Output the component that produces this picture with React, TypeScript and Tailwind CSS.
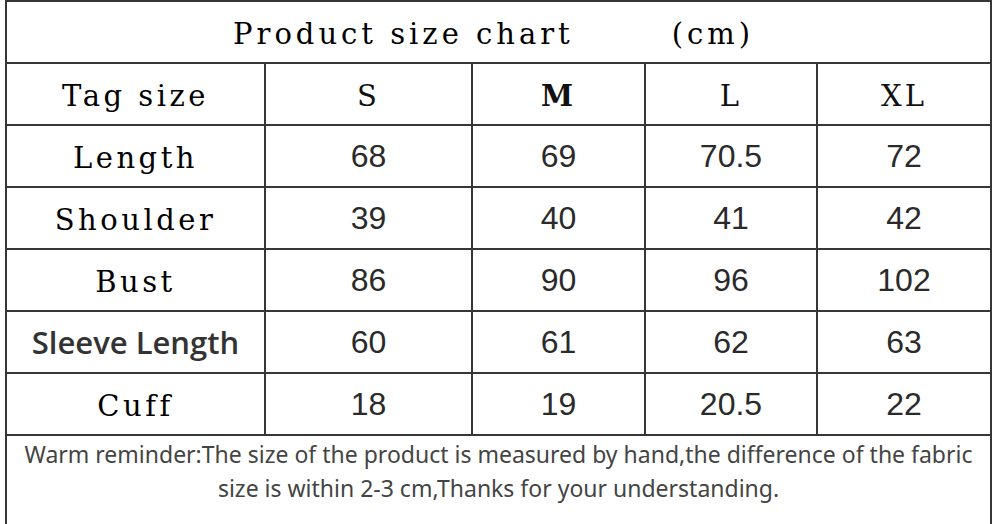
import React from "react";

const cols = ["S", "M", "L", "XL"];
const rows: { label: string; sans?: boolean; values: string[] }[] = [
  { label: "Length", values: ["68", "69", "70.5", "72"] },
  { label: "Shoulder", values: ["39", "40", "41", "42"] },
  { label: "Bust", values: ["86", "90", "96", "102"] },
  { label: "Sleeve Length", sans: true, values: ["60", "61", "62", "63"] },
  { label: "Cuff", values: ["18", "19", "20.5", "22"] },
];

const serif = "font-['DejaVu_Serif',serif] text-[29px]";
const sans = "font-['Liberation_Sans',Arial,sans-serif]";

export default function App() {
  return (
    <div className="w-[1003px] h-[524px] bg-white overflow-hidden">
      <div className="ml-[5px] w-[987px] h-[524px] bg-[#363636] px-[2px] pt-[2px] flex flex-col gap-[2px]">
        <div className="grid grid-cols-[257px_205px_171px_170px_172px] auto-rows-[60px] gap-[2px]">
          <div className={`col-span-5 bg-white flex items-center pl-[226px] pt-[6px] ${serif} tracking-[4px] text-[#000]`}>
            <span>Product size chart</span>
            <span className="ml-[98px]">(cm)</span>
          </div>
          <div className={`bg-white flex items-center justify-center pt-[5px] ${serif} tracking-[3.5px] text-[#000]`}>
            Tag size
          </div>
          {cols.map((c) => (
            <div
              key={c}
              className={`bg-white flex items-center justify-center pt-[5px] ${serif} tracking-[3px] text-[#111] ${
                c === "M" ? "font-bold" : ""
              }`}
            >
              {c}
            </div>
          ))}
          {rows.map((r) => (
            <React.Fragment key={r.label}>
              <div
                className={`bg-white flex items-center justify-center ${
                  r.sans
                    ? "font-['Open_Sans',sans-serif] font-semibold text-[31px] text-[#333]"
                    : `${serif} tracking-[3.5px] pt-[5px] text-[#000]`
                }`}
              >
                {r.label}
              </div>
              {r.values.map((v, i) => (
                <div
                  key={i}
                  className={`bg-white flex items-center justify-center ${sans} text-[32px] text-[#2a2a2a]`}
                >
                  {v}
                </div>
              ))}
            </React.Fragment>
          ))}
        </div>
        <div className="flex-1 bg-white flex flex-col items-center pt-[1px] font-['Noto_Sans',sans-serif] text-[23px] leading-[34px] text-[#444]">
          <p>Warm reminder:The size of the product is measured by hand,the difference of the fabric</p>
          <p>size is within 2-3 cm,Thanks for your understanding.</p>
        </div>
      </div>
    </div>
  );
}
